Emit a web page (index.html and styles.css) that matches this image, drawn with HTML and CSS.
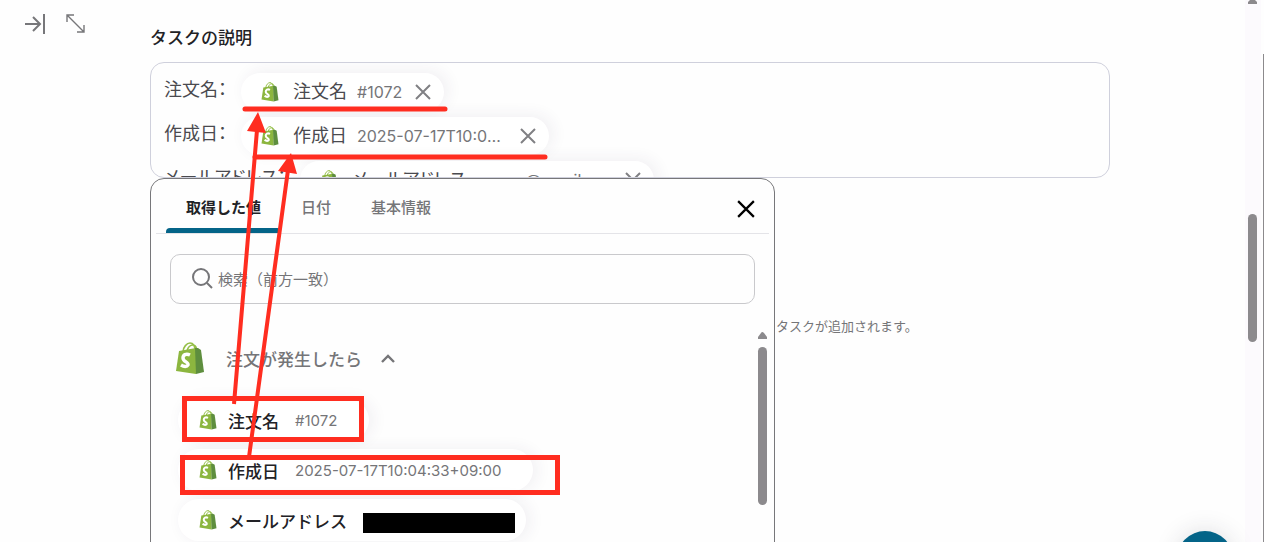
FILE: index.html
```html
<!DOCTYPE html>
<html lang="ja">
<head>
    <meta charset="UTF-8">
    <meta name="viewport" content="width=device-width, initial-scale=1.0">
    <title>タスクの説明</title>
    <link rel="stylesheet" href="styles.css">
</head>
<body>
    <!-- 共通アイコン -->
    <svg class="defs" width="0" height="0">
        <symbol id="bag" viewBox="0 0 28 33">
            <path d="M7 10C7 5 11 1 14 1s5 3 5 8M11 9c1-4 3-6 6-6s3 2 4 5" fill="none" stroke="#95bf47" stroke-width="1.6"/>
            <path d="M3 9l17-3v26L0 29z" fill="#8cb63f"/>
            <path d="M19 6l3 0 3 2 3 22-8 2z" fill="#5e8e3e"/>
            <path d="M14 13c-4-2-7 0-7 3 0 4 6 4 5 7-1 2-4 2-7 0" fill="none" stroke="#fff" stroke-width="3.400"/>
        </symbol>
        <symbol id="cross" viewBox="0 0 16 16">
            <path d="M1 1l14 14M15 1L1 15" fill="none" stroke="currentColor" stroke-width="2"/>
        </symbol>
    </svg>

    <div class="page">
        <nav class="tools">
            <button type="button" aria-label="閉じる">
                <svg width="22" height="22" viewBox="0 0 22 22"><path d="M0 11h15M8 4l7 7-7 7M19 1v20"/></svg>
            </button>
            <button type="button" aria-label="拡大">
                <svg class="thin" width="22" height="22" viewBox="0 0 22 22"><path d="M2 2l17 17M2 9V2h7M19 12v7h-7"/></svg>
            </button>
        </nav>

        <main class="content">
            <h1 class="title">タスクの説明</h1>

            <div class="field">
                <div class="editor">
                    <div class="line">
                        <span>注文名：</span>
                        <span class="chip">
                            <svg class="bag"><use href="#bag"/></svg>
                            <span class="chip-name">注文名</span>
                            <span class="chip-value">#1072</span>
                            <button type="button" aria-label="削除"><svg width="16" height="16"><use href="#cross"/></svg></button>
                        </span>
                    </div>
                    <div class="line">
                        <span>作成日：</span>
                        <span class="chip">
                            <svg class="bag"><use href="#bag"/></svg>
                            <span class="chip-name">作成日</span>
                            <span class="chip-value">2025-07-17T10:04:33+09:00</span>
                            <button type="button" aria-label="削除"><svg width="16" height="16"><use href="#cross"/></svg></button>
                        </span>
                    </div>
                    <div class="line">
                        <span>メールアドレス：</span>
                        <span class="chip">
                            <svg class="bag"><use href="#bag"/></svg>
                            <span class="chip-name">メールアドレス</span>
                            <span class="chip-value mail">@email</span>
                            <button type="button" aria-label="削除"><svg width="16" height="16"><use href="#cross"/></svg></button>
                        </span>
                    </div>
                </div>

                <section class="picker">
                    <header class="picker-head">
                        <div class="tabs" role="tablist">
                            <button type="button" role="tab" class="tab active">取得した値</button>
                            <button type="button" role="tab" class="tab">日付</button>
                            <button type="button" role="tab" class="tab">基本情報</button>
                        </div>
                        <button type="button" class="close" aria-label="閉じる"><svg width="18" height="18"><use href="#cross"/></svg></button>
                    </header>

                    <label class="search">
                        <svg width="22" height="22" viewBox="0 0 22 22"><circle cx="9" cy="9" r="8"/><path d="M15 15l5 5"/></svg>
                        <input type="text" placeholder="検索（前方一致）" aria-label="検索">
                    </label>

                    <div class="picker-body">
                        <div class="list">
                            <button type="button" class="group">
                                <svg class="bag-large"><use href="#bag"/></svg>
                                <span>注文が発生したら</span>
                                <svg class="chevron" width="16" height="10" viewBox="0 0 16 10"><path d="M2 9l6-6 6 6"/></svg>
                            </button>
                            <button type="button" class="item">
                                <svg class="bag"><use href="#bag"/></svg>
                                <span class="item-name">注文名</span>
                                <span class="item-value">#1072</span>
                            </button>
                            <button type="button" class="item">
                                <svg class="bag"><use href="#bag"/></svg>
                                <span class="item-name">作成日</span>
                                <span class="item-value">2025-07-17T10:04:33+09:00</span>
                            </button>
                            <button type="button" class="item">
                                <svg class="bag"><use href="#bag"/></svg>
                                <span class="item-name">メールアドレス</span>
                                <span class="redacted"></span>
                            </button>
                        </div>
                        <div class="list-scroll">
                            <svg width="9" height="7"><path d="M0 7V5l3-4q1-2 3 0l3 4v2z"/></svg>
                            <div class="list-thumb"></div>
                        </div>
                    </div>
                </section>
            </div>

            <p class="note">タスクが追加されます。</p>
        </main>

        <div class="page-scroll">
            <svg width="9" height="4"><path d="M0 4V2l2-2h5l2 2v2z"/></svg>
            <div class="page-thumb"></div>
        </div>
        <div class="edge"></div>
    </div>

    <button type="button" class="fab" aria-label="ヘルプ"></button>

    <!-- 説明用の赤線と矢印 -->
    <svg class="marks">
        <path class="underline" d="M245 109h200M255 157h290"/>
        <rect x="184.500" y="398.500" width="177" height="41"/>
        <rect x="182.500" y="457.500" width="375" height="35"/>
        <path class="shaft" d="M234 404L257 130M249 457L288 170"/>
        <path class="head" d="M258 112l8 21-19-2zM291 153l6 21-19-3z"/>
    </svg>
</body>
</html>
```
FILE: styles.css
```css
:root {
    --text: #222226;
    --sub: #757578;
    --line: #cfd0dc;
    --gray: #8c8a8d;
    --accent: #046488;
    --red: #ff2d20;
}
* {
    box-sizing: border-box;
}
body {
    margin: 0;
    height: 100vh;
    overflow: hidden;
    position: relative;
    background: #fefefe;
    color: var(--text);
    font-family: Inter, "Noto Sans CJK JP", sans-serif;
}
button {
    padding: 0;
    border: none;
    background: none;
    color: inherit;
    font: inherit;
    cursor: pointer;
}
svg {
    display: block;
    flex: none;
}
.defs {
    position: absolute;
}
.page {
    display: grid;
    grid-template-columns: 150px 1fr 16px 3px;
    height: 100%;
}
.tools {
    display: flex;
    align-items: flex-start;
    gap: 18px;
    padding: 13px 0 0 25px;
}
.tools svg {
    fill: none;
    stroke: #77777a;
    stroke-width: 2;
}
.tools .thin {
    stroke-width: 1.4;
}
.content {
    padding: 25px 135px 0 0;
    min-width: 0;
}
.title {
    margin: 0 0 11px;
    font-size: 17px;
    font-weight: 500;
    line-height: 26px;
}
.field {
    position: relative;
}
.editor {
    height: 116px;
    padding: 7px 13px;
    border: 1px solid var(--line);
    border-radius: 14px;
    overflow: hidden;
    color: #4a4a4f;
    font-size: 18px;
    line-height: 24px;
    font-feature-settings: "palt";
}
.line {
    display: flex;
    align-items: center;
    gap: 14px;
    height: 44px;
    white-space: nowrap;
}
.line > span:first-child {
    padding-bottom: 4px;
}
.chip {
    display: flex;
    align-items: center;
    height: 38px;
    padding: 0 13px 0 20px;
    border-radius: 19px;
    background: #fff;
    box-shadow: 4px -2px 16px rgba(60, 40, 90, 0.07);
}
.bag {
    width: 18px;
    height: 20px;
}
.chip-name {
    margin: 0 10px 0 14px;
}
.chip-value {
    max-width: 150px;
    margin-right: 13px;
    overflow: hidden;
    text-overflow: ellipsis;
    color: var(--sub);
    font-size: 16px;
}
.mail {
    max-width: none;
    padding-left: 50px;
    margin-right: 44px;
}
.chip button {
    color: #808084;
}
.picker {
    position: absolute;
    top: 116px;
    left: 0;
    width: 625px;
    height: 420px;
    border: 1px solid #77777a;
    border-radius: 14px;
    background: #fefefe;
}
.picker-head {
    display: flex;
    justify-content: space-between;
    height: 55px;
    margin: 0 5px;
    padding: 0 14px 0 10px;
    border-bottom: 1px solid #e4e4e8;
}
.tabs {
    display: flex;
}
.tab {
    position: relative;
    padding: 0 20px;
    color: var(--sub);
    font-size: 15px;
    font-weight: 500;
}
.active {
    color: var(--text);
    font-weight: 700;
}
.active::after {
    content: "";
    position: absolute;
    left: 0;
    right: 0;
    bottom: 0;
    height: 5px;
    border-radius: 4px 4px 0 0;
    background: var(--accent);
}
.close {
    padding-top: 6px;
    color: #000;
}
.search {
    display: flex;
    align-items: center;
    gap: 4px;
    height: 50px;
    margin: 20px 19px 0;
    padding: 0 21px;
    border: 1px solid #c9c9cc;
    border-radius: 10px;
}
.search svg {
    fill: none;
    stroke: var(--sub);
    stroke-width: 2;
}
.search input {
    flex: 1;
    padding: 0;
    border: none;
    outline: none;
    background: none;
    font: inherit;
    font-size: 15px;
}
.search input::placeholder {
    color: var(--sub);
}
.picker-body {
    display: flex;
    justify-content: space-between;
    margin-top: 28px;
    padding: 0 7px 0 27px;
}
.list {
    display: flex;
    flex-direction: column;
    align-items: flex-start;
    gap: 8px;
    padding-top: 8px;
}
.group {
    display: flex;
    align-items: center;
    height: 36px;
    margin: 0 0 15px -2px;
    color: var(--sub);
    font-size: 17px;
    font-weight: 500;
}
.bag-large {
    width: 28px;
    height: 33px;
    margin-right: 22px;
}
.chevron {
    margin-left: 18px;
    fill: none;
    stroke: var(--sub);
    stroke-width: 2.4;
}
.item {
    display: flex;
    align-items: center;
    height: 42px;
    padding: 0 32px 0 21px;
    border-radius: 21px;
    background: #fff;
    box-shadow: 4px 0 16px rgba(60, 40, 90, 0.07);
}
.item-name {
    margin: 0 16px 0 11px;
    font-size: 17px;
    font-weight: 500;
}
.item-value {
    color: var(--sub);
    font-size: 15px;
}
.redacted {
    width: 152px;
    height: 20px;
    margin: 6px -21px 0 0;
    background: #000;
}
.list-scroll svg,
.page-scroll svg {
    fill: var(--gray);
}
.list-thumb {
    width: 9px;
    height: 158px;
    margin-top: 8px;
    border-radius: 5px;
    background: var(--gray);
}
.note {
    margin: 135px 0 0 626px;
    color: var(--sub);
    font-size: 13px;
    line-height: 26px;
    white-space: nowrap;
}
.page-scroll {
    padding-left: 3px;
    background: #fcfafd;
}
.page-thumb {
    width: 9px;
    height: 128px;
    margin-top: 210px;
    border-radius: 5px;
    background: var(--gray);
}
.edge {
    margin: 54px 0 0 2px;
    background: var(--gray);
}
.fab {
    position: absolute;
    right: 31px;
    bottom: -45px;
    width: 56px;
    height: 56px;
    border-radius: 50%;
    background: var(--accent);
    box-shadow: 0 0 24px rgba(40, 40, 60, 0.15);
}
.marks {
    position: absolute;
    inset: 0;
    width: 100%;
    height: 100%;
    pointer-events: none;
    fill: none;
    stroke: var(--red);
    stroke-width: 5;
}
.underline {
    stroke-linecap: round;
}
.marks .shaft {
    stroke-width: 4;
}
.marks .head {
    fill: var(--red);
    stroke: none;
}
```
